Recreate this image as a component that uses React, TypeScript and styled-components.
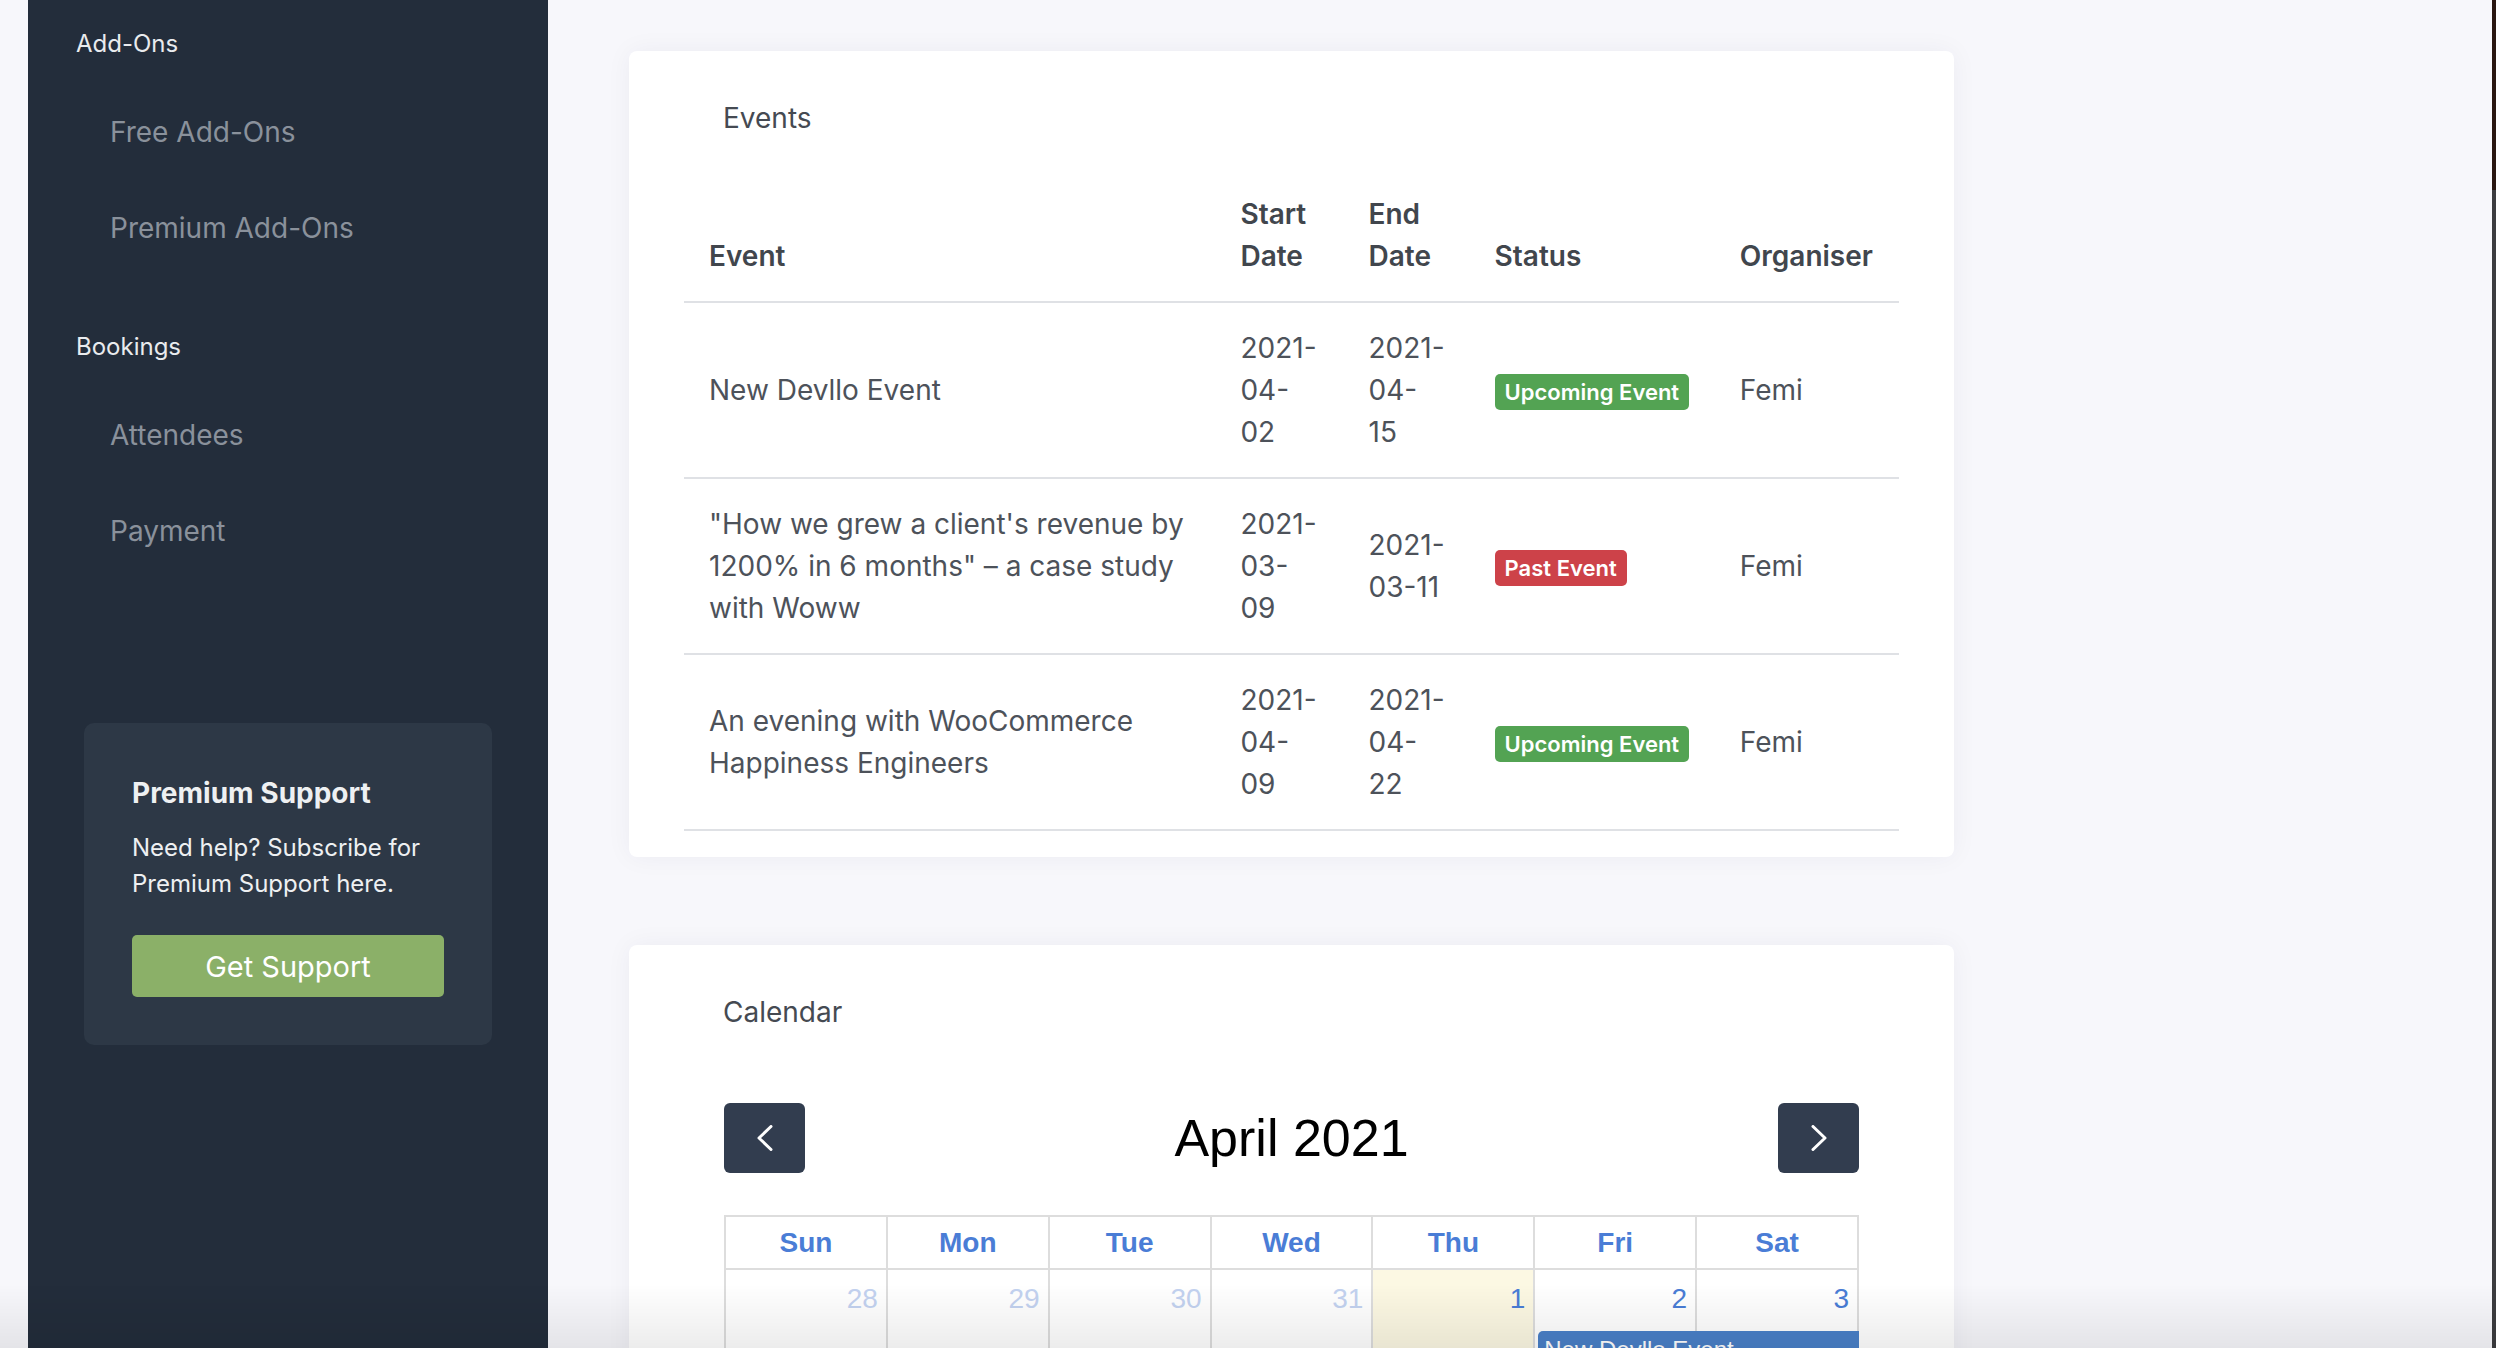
import styled, { createGlobalStyle } from "styled-components";

const GlobalStyle = createGlobalStyle`
  html, body {
    margin: 0;
    padding: 0;
    height: 100%;
    overflow: hidden;
  }
  body {
    background: #f7f7fb;
    font-family: Inter, "Noto Sans", sans-serif;
  }
  * {
    box-sizing: border-box;
  }
`;

type EventRow = {
  title: string;
  start: string;
  end: string;
  past: boolean;
  organiser: string;
};

const events: EventRow[] = [
  { title: "New Devllo Event", start: "2021-04-02", end: "2021-04-15", past: false, organiser: "Femi" },
  {
    title: "\"How we grew a client's revenue by 1200% in 6 months\" – a case study with Woww",
    start: "2021-03-09",
    end: "2021-03-11",
    past: true,
    organiser: "Femi",
  },
  {
    title: "An evening with WooCommerce Happiness Engineers",
    start: "2021-04-09",
    end: "2021-04-22",
    past: false,
    organiser: "Femi",
  },
];

const weekdays = ["Sun", "Mon", "Tue", "Wed", "Thu", "Fri", "Sat"];
const firstWeek = [
  { day: 28, other: true },
  { day: 29, other: true },
  { day: 30, other: true },
  { day: 31, other: true },
  { day: 1, other: false, today: true },
  { day: 2, other: false },
  { day: 3, other: false },
];

const Page = styled.div`
  display: flex;
  height: 100vh;
  background: #f7f7fb;
`;

const Gutter = styled.div`
  width: 28px;
  flex-shrink: 0;
`;

const WindowEdge = styled.div`
  width: 4px;
  flex-shrink: 0;
  background: linear-gradient(#2a1711 0 190px, #3d3d40 190px);
`;

const Sidebar = styled.aside`
  width: 520px;
  flex-shrink: 0;
  background: #232d3b;
  padding-top: 26px;
  display: flex;
  flex-direction: column;
`;

const Nav = styled.nav`
  padding-left: 48px;
`;

const NavGroup = styled.div`
  margin-bottom: 53px;
  &:last-child {
    margin-bottom: 0;
  }
`;

const GroupTitle = styled.div`
  font-size: 24px;
  line-height: 36px;
  font-weight: 400;
  color: #e9ebee;
  margin-bottom: 22px;
`;

const NavLink = styled.a`
  display: block;
  padding: 27px 0 27px 34px;
  font-size: 28px;
  line-height: 42px;
  color: #8a919b;
  text-decoration: none;
`;

const SupportCard = styled.div`
  margin: 144px 56px 0;
  padding: 49px 48px 48px;
  background: #2d3846;
  border-radius: 10px;
`;

const SupportTitle = styled.h3`
  margin: 0 0 16px;
  font-size: 28px;
  line-height: 42px;
  font-weight: 700;
  color: #eef0f2;
`;

const SupportText = styled.p`
  margin: 0 0 33px;
  font-size: 24px;
  line-height: 36px;
  color: #eef0f2;
`;

const SupportButton = styled.button`
  display: block;
  width: 100%;
  height: 62px;
  border: none;
  border-radius: 5px;
  background: #8bb068;
  color: #fff;
  font-family: inherit;
  font-size: 29px;
  cursor: pointer;
`;

const Main = styled.main`
  flex: 1;
  min-width: 0;
  padding: 51px 0 0 81px;
  overflow: hidden;
`;

const Card = styled.section`
  width: 1325px;
  background: #fff;
  border-radius: 8px;
  box-shadow: 0 0 26px rgba(40, 40, 80, 0.05);
  padding: 46px 55px 26px;
  margin-bottom: 88px;
`;

const CardTitle = styled.h2`
  margin: 0 0 29px 39px;
  font-size: 28px;
  line-height: 42px;
  font-weight: 400;
  color: #454a52;
`;

const Table = styled.table`
  width: 100%;
  border-collapse: collapse;
  table-layout: fixed;
  font-size: 28px;
  line-height: 42px;
  color: #4d525a;
`;

const Th = styled.th<{ $narrow?: boolean }>`
  text-align: left;
  vertical-align: bottom;
  font-weight: 600;
  color: #41464d;
  padding: 25px ${(p) => (p.$narrow ? "25px" : "8px")} 24px 25px;
  border-bottom: 2px solid #dfe1e5;
`;

const Td = styled.td<{ $narrow?: boolean }>`
  vertical-align: middle;
  padding: 24px ${(p) => (p.$narrow ? "25px" : "8px")} 24px 25px;
  border-bottom: 2px solid #dfe1e5;
`;

const Badge = styled.span<{ $past?: boolean }>`
  display: inline-block;
  height: 36px;
  padding: 0 10px;
  border-radius: 5px;
  background: ${(p) => (p.$past ? "#cd4249" : "#53a353")};
  color: #fff;
  font-size: 22px;
  line-height: 36px;
  font-weight: 600;
  vertical-align: middle;
`;

const CalendarBody = styled.div`
  padding: 0 40px;
  font-family: "Liberation Sans", Arial, sans-serif;
`;

const Toolbar = styled.div`
  display: flex;
  align-items: center;
  justify-content: space-between;
  margin-top: 70px;
`;

const MonthTitle = styled.h2`
  margin: 0;
  font-size: 52px;
  line-height: 1;
  font-weight: 400;
  color: #000;
`;

const NavButton = styled.button`
  width: 81px;
  height: 70px;
  border: none;
  border-radius: 6px;
  background: #323d4f;
  display: flex;
  align-items: center;
  justify-content: center;
  cursor: pointer;
`;

const DayGrid = styled.div`
  display: grid;
  grid-template-columns: repeat(7, 1fr);
  border-left: 2px solid #ddd;
`;

const HeadRow = styled(DayGrid)`
  margin-top: 42px;
  border-top: 2px solid #ddd;
`;

const HeadCell = styled.div`
  height: 53px;
  line-height: 51px;
  text-align: center;
  font-size: 28px;
  font-weight: 700;
  color: #4a7dd6;
  border-right: 2px solid #ddd;
  border-bottom: 2px solid #ddd;
`;

const WeekRow = styled(DayGrid)`
  grid-template-rows: auto auto 1fr;
  height: 220px;
`;

const DayBg = styled.div<{ $today?: boolean }>`
  grid-row: 1 / -1;
  border-right: 2px solid #ddd;
  background: ${(p) => (p.$today ? "#fcf8e3" : "#fff")};
`;

const DayNumber = styled.div<{ $other?: boolean }>`
  grid-row: 1;
  padding: 12px 10px 0;
  text-align: right;
  font-size: 28px;
  line-height: 33.6px;
  color: ${(p) => (p.$other ? "#c3d2f0" : "#4a7dd6")};
`;

const EventBar = styled.div`
  grid-row: 2;
  margin: 15px 0 0 3px;
  padding: 4px 6px;
  border-radius: 5px 0 0 5px;
  background: #4a80c8;
  color: #fff;
  font-size: 24px;
  line-height: 30px;
`;

const BottomShade = styled.div`
  position: fixed;
  left: 0;
  right: 0;
  bottom: 0;
  height: 64px;
  background: linear-gradient(rgba(0, 0, 0, 0), rgba(0, 0, 0, 0.075));
  pointer-events: none;
`;

const Chevron = ({ dir }: { dir: "left" | "right" }) => (
  <svg width="16" height="26" viewBox="0 0 16 26" fill="none">
    <polyline
      points={dir === "left" ? "14,1.5 2,13 14,24.5" : "2,1.5 14,13 2,24.5"}
      stroke="#fff"
      strokeWidth="3"
      strokeLinecap="round"
      strokeLinejoin="round"
    />
  </svg>
);

const App = () => {
  return (
    <>
      <GlobalStyle />
      <Page>
        <Gutter />
        <Sidebar>
          <Nav>
            <NavGroup>
              <GroupTitle>Add-Ons</GroupTitle>
              <NavLink>Free Add-Ons</NavLink>
              <NavLink>Premium Add-Ons</NavLink>
            </NavGroup>
            <NavGroup>
              <GroupTitle>Bookings</GroupTitle>
              <NavLink>Attendees</NavLink>
              <NavLink>Payment</NavLink>
            </NavGroup>
          </Nav>
          <SupportCard>
            <SupportTitle>Premium Support</SupportTitle>
            <SupportText>Need help? Subscribe for Premium Support here.</SupportText>
            <SupportButton>Get Support</SupportButton>
          </SupportCard>
        </Sidebar>

        <Main>
          <Card>
            <CardTitle>Events</CardTitle>
            <Table>
              <colgroup>
                <col style={{ width: 531 }} />
                <col style={{ width: 128 }} />
                <col style={{ width: 126 }} />
                <col style={{ width: 245 }} />
                <col style={{ width: 184 }} />
              </colgroup>
              <thead>
                <tr>
                  <Th>Event</Th>
                  <Th $narrow>Start Date</Th>
                  <Th $narrow>End Date</Th>
                  <Th>Status</Th>
                  <Th>Organiser</Th>
                </tr>
              </thead>
              <tbody>
                {events.map((ev) => (
                  <tr key={ev.title}>
                    <Td>{ev.title}</Td>
                    <Td $narrow>{ev.start}</Td>
                    <Td $narrow>{ev.end}</Td>
                    <Td>
                      <Badge $past={ev.past}>{ev.past ? "Past Event" : "Upcoming Event"}</Badge>
                    </Td>
                    <Td>{ev.organiser}</Td>
                  </tr>
                ))}
              </tbody>
            </Table>
          </Card>

          <Card>
            <CardTitle>Calendar</CardTitle>
            <CalendarBody>
              <Toolbar>
                <NavButton aria-label="prev">
                  <Chevron dir="left" />
                </NavButton>
                <MonthTitle>April 2021</MonthTitle>
                <NavButton aria-label="next">
                  <Chevron dir="right" />
                </NavButton>
              </Toolbar>
              <HeadRow>
                {weekdays.map((d) => (
                  <HeadCell key={d}>{d}</HeadCell>
                ))}
              </HeadRow>
              <WeekRow>
                {firstWeek.map((d, i) => (
                  <DayBg key={`bg-${d.day}`} $today={d.today} style={{ gridColumn: i + 1 }} />
                ))}
                {firstWeek.map((d, i) => (
                  <DayNumber key={`n-${d.day}`} $other={d.other} style={{ gridColumn: i + 1 }}>
                    {d.day}
                  </DayNumber>
                ))}
                <EventBar style={{ gridColumn: "6 / 8" }}>New Devllo Event</EventBar>
              </WeekRow>
            </CalendarBody>
          </Card>
        </Main>
        <WindowEdge />
      </Page>
      <BottomShade />
    </>
  );
};

export default App;
